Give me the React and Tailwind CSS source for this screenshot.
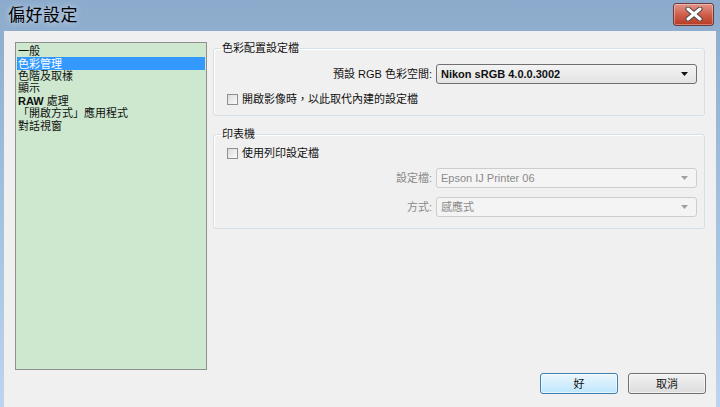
import { useState } from "react";

const FONT = {
  fontFamily:
    '"Liberation Sans", "Noto Sans CJK TC", "Noto Sans CJK SC", sans-serif',
};

const items = [
  { label: "一般" },
  { label: "色彩管理" },
  { label: "色階及取樣" },
  { label: "顯示" },
  { label: "處理", prefix: "RAW " },
  { label: "「開啟方式」應用程式" },
  { label: "對話視窗" },
];

function Checkbox({ label }) {
  return (
    <div className="flex items-center gap-[4px] h-[12px]">
      <span className="w-[11px] h-[11px] border border-[#8f8f8f] bg-gradient-to-br from-[#dcdcdc] to-[#fbfbfb] shrink-0" />
      <span className="text-[11px] leading-[12px] text-[#111]">{label}</span>
    </div>
  );
}

function Arrow({ disabled }) {
  return (
    <svg width="7" height="4" viewBox="0 0 7 4" className="shrink-0">
      <path d="M0 0 H7 L3.5 4 Z" fill={disabled ? "#a0a0a0" : "#111"} />
    </svg>
  );
}

function Select({ value, disabled }) {
  return (
    <div
      className={`w-[261px] h-[20px] rounded-[3px] border flex items-center justify-between pl-[4px] pr-[8px] ${
        disabled
          ? "border-[#cdcdcd] bg-[#f4f4f4] text-[#8a8a8a]"
          : "border-[#707070] bg-gradient-to-b from-[#f3f3f3] to-[#e3e3e3] text-[#111] font-bold"
      }`}
    >
      <span className="text-[11px] leading-[12px]">{value}</span>
      <Arrow disabled={disabled} />
    </div>
  );
}

function Row({ label, disabled, children }) {
  return (
    <div className="flex items-center">
      <span
        className={`flex-1 text-right pr-[4px] text-[11px] leading-[12px] ${
          disabled ? "text-[#8a8a8a]" : "text-[#111]"
        }`}
      >
        {label}
      </span>
      {children}
    </div>
  );
}

function Group({ title, className, children }) {
  return (
    <fieldset
      className={`border border-[#d5dfe5] rounded-[3px] shadow-[inset_1px_1px_0_#fff] ${className}`}
    >
      <legend className="ml-[7px] px-[1px] text-[11px] leading-[14px] text-[#111]">
        {title}
      </legend>
      <div className="pl-[13px] pr-[7px]">{children}</div>
    </fieldset>
  );
}

export default function App() {
  const [selected, setSelected] = useState(1);

  return (
    <div
      style={FONT}
      className="w-[720px] h-[407px] flex flex-col overflow-hidden bg-gradient-to-b from-[#8cabcc] via-[#a3c0df] to-[#bcd5ef]"
    >
      {/* Title bar */}
      <div className="h-[31px] flex items-center justify-between pl-[8px] pr-[6px] shrink-0">
        <span className="text-[17px] leading-[20px] tracking-[0.5px] text-black [text-shadow:0_0_6px_rgba(255,255,255,0.7)]">
          偏好設定
        </span>
        <div className="w-[41px] h-[23px] mb-[3px] rounded-[3px] border border-[#6d3a3a] bg-gradient-to-b from-[#e2948a] via-[#cf5f4c] to-[#b73a24] flex items-center justify-center shadow-[inset_0_0_0_1px_rgba(255,255,255,0.35)]">
          <svg width="18" height="14" viewBox="0 0 18 14">
            <path
              d="M3 2 L15 12 M15 2 L3 12"
              stroke="#4a4a4a"
              strokeWidth="5"
              strokeLinecap="round"
            />
            <path
              d="M3 2 L15 12 M15 2 L3 12"
              stroke="#ffffff"
              strokeWidth="3"
              strokeLinecap="round"
            />
          </svg>
        </div>
      </div>

      {/* Content */}
      <div className="flex-1 mx-[4px] bg-[#f0f0f0] flex pl-[11px] pr-[10px] pt-[11px] pb-[13px] gap-[6px]">
        {/* Category list */}
        <div className="w-[192px] h-[328px] border border-[#8e8f8f] bg-[#cde8cf] p-[1px] pt-[2px] shrink-0">
          {items.map((item, i) => (
            <div
              key={item.label}
              onClick={() => setSelected(i)}
              className={`h-[12.4px] flex items-center pl-[1px] text-[11px] leading-[12px] whitespace-pre ${
                selected === i ? "bg-[#3399ff] text-white" : "text-[#111]"
              }`}
            >
              {item.prefix && <span className="font-bold">{item.prefix}</span>}
              {item.label}
            </div>
          ))}
        </div>

        {/* Settings */}
        <div className="flex-1 flex flex-col -mt-[1px]">
          <Group title="色彩配置設定檔" className="pb-[10px] mr-[1px]">
            <div className="mt-[9px]">
              <Row label="預設 RGB 色彩空間:">
                <Select value="Nikon sRGB 4.0.0.3002" />
              </Row>
            </div>
            <div className="mt-[9px]">
              <Checkbox label="開啟影像時，以此取代內建的設定檔" />
            </div>
          </Group>

          <Group title="印表機" className="mt-[11px] pb-[11px] mr-[1px]">
            <div className="mt-[6px]">
              <Checkbox label="使用列印設定檔" />
            </div>
            <div className="mt-[9px]">
              <Row label="設定檔:" disabled>
                <Select value="Epson IJ Printer 06" disabled />
              </Row>
            </div>
            <div className="mt-[9px]">
              <Row label="方式:" disabled>
                <Select value="感應式" disabled />
              </Row>
            </div>
          </Group>

          <div className="mt-auto flex justify-end gap-[10px]">
            <button className="w-[78px] h-[21px] rounded-[3px] border border-[#3c7fb1] bg-gradient-to-b from-[#eaf6fd] to-[#bee6fd] text-[11px] leading-[12px] text-[#111] shadow-[inset_0_0_0_1px_rgba(255,255,255,0.6)]">
              好
            </button>
            <button className="w-[78px] h-[21px] rounded-[3px] border border-[#707070] bg-gradient-to-b from-[#f2f2f2] to-[#dcdcdc] text-[11px] leading-[12px] text-[#111] shadow-[inset_0_0_0_1px_rgba(255,255,255,0.6)]">
              取消
            </button>
          </div>
        </div>
      </div>
    </div>
  );
}
